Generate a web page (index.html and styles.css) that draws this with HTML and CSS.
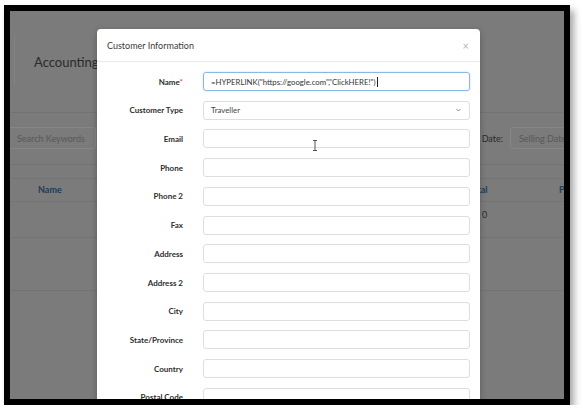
FILE: index.html
```html
<!DOCTYPE html>
<html lang="en">
<head>
<meta charset="utf-8">
<title>Customer Information</title>
<link rel="stylesheet" href="styles.css">
</head>
<body>
<div class="frame">
  <div class="screen">
    <!-- page behind the dialog (dimmed by the backdrop) -->
    <div class="page">
      <div class="title-card"><h1 class="page-title">Accounting</h1></div>
      <div class="rule rule-a"></div>
      <div class="toolbar">
        <div class="fake-input search">Search Keywords</div>
        <div class="date-filter">
          <span class="date-label">Date:</span>
          <div class="fake-input date">Selling Date</div>
        </div>
      </div>
      <div class="rule rule-b"></div>
      <div class="table-head">
        <span class="th th-name">Name</span>
        <span class="th th-total">Total</span>
        <span class="th th-profit">Profit</span>
      </div>
      <div class="table-row">
        <span class="td td-total">0</span>
      </div>
      <div class="card-foot"></div>
    </div>

    <!-- dialog -->
    <div class="modal">
      <div class="modal-header">
        <span class="modal-title">Customer Information</span>
        <span class="modal-close">×</span>
      </div>
      <form class="modal-body">
        <label class="field-label">Name<span class="req">*</span></label>
        <div class="field focus">=HYPERLINK("https://google.com","ClickHERE!")<span class="caret"></span></div>

        <label class="field-label">Customer Type</label>
        <div class="field select">Traveller
          <svg class="chev" viewBox="0 0 6 4" width="5" height="4"><path d="M0.5 0.7l2.5 2.5 2.5-2.5" fill="none" stroke="#666" stroke-width="0.9"/></svg>
        </div>

        <label class="field-label">Email</label>
        <div class="field"></div>

        <label class="field-label">Phone</label>
        <div class="field"></div>

        <label class="field-label">Phone 2</label>
        <div class="field"></div>

        <label class="field-label">Fax</label>
        <div class="field"></div>

        <label class="field-label">Address</label>
        <div class="field"></div>

        <label class="field-label">Address 2</label>
        <div class="field"></div>

        <label class="field-label">City</label>
        <div class="field"></div>

        <label class="field-label">State/Province</label>
        <div class="field"></div>

        <label class="field-label">Country</label>
        <div class="field"></div>

        <label class="field-label">Postal Code</label>
        <div class="field"></div>
      </form>
      <!-- mouse pointer (text I-beam) hovering the Email field -->
      <svg class="ibeam" viewBox="0 0 6 11" width="6" height="11">
        <path d="M1 0.5h4M3 0.5v10M1 10.5h4" fill="none" stroke="#555" stroke-width="1"/>
      </svg>
    </div>
  </div>
</div>
</body>
</html>
```

FILE: styles.css
```css
html, body {
  margin: 0;
  background: #ffffff;
}

body {
  font-family: Lato, "Open Sans", sans-serif;
}

/* black window frame with a soft drop shadow */
.frame {
  margin: 5px 0 0 4px;
  width: 554px;
  height: 388px;
  border: 6px solid #000;
  box-shadow: 4px 5px 7px rgba(0, 0, 0, 0.35);
}

.screen {
  position: relative;
  width: 100%;
  height: 100%;
  overflow: hidden;
  background: #7a7b7a;
}

/* ---------- dimmed page ---------- */
.page {
  display: flex;
  flex-direction: column;
  color: #2d2d2d;
}

.title-card {
  margin: 27px 0 0 4px;
  height: 47px;
  border-left: 1px solid #828382;
  display: flex;
  align-items: center;
}

.page-title {
  margin: 0 0 0 19px;
  font-size: 13px;
  font-weight: 400;
  color: #2b2b2b;
}

.rule {
  height: 1px;
  background: #727372;
}

.rule-a {
  margin-top: 27px;
}

.toolbar {
  display: flex;
  justify-content: space-between;
  align-items: center;
  margin-top: 14px;
  height: 22px;
}

.fake-input {
  box-sizing: border-box;
  height: 22px;
  border: 1px solid #858685;
  border-radius: 3px;
  display: flex;
  align-items: center;
  font-size: 9px;
  color: #585958;
}

.search {
  width: 86px;
  padding-left: 7px;
  border-left: none;
  border-radius: 0 3px 3px 0;
}

.date-filter {
  display: flex;
  align-items: center;
  gap: 7px;
}

.date-label {
  font-size: 9px;
  color: #2a2a2a;
}

.date {
  width: 54px;
  padding-left: 8px;
  border-right: none;
  border-radius: 3px 0 0 3px;
  white-space: nowrap;
  overflow: hidden;
}

.rule-b {
  margin-top: 15px;
}

.table-head {
  position: relative;
  margin-top: 13px;
  height: 22px;
  border-top: 1px solid #737473;
  border-bottom: 1px solid #737473;
  font-size: 9px;
  font-weight: 700;
  color: #1d3b58;
}

.th {
  position: absolute;
  top: 5px;
}

.th-name { left: 28px; }
.th-total { left: 458px; }
.th-profit { left: 549px; }

.table-row {
  position: relative;
  height: 35px;
  border-bottom: 1px solid #737473;
  font-size: 9px;
  color: #2d2d2d;
}

.td-total {
  position: absolute;
  left: 472px;
  top: 7px;
}

.card-foot {
  height: 52px;
  border-bottom: 1px solid #727372;
}

/* ---------- dialog ---------- */
.modal {
  position: absolute;
  left: 87px;
  top: 18px;
  width: 383px;
  height: 420px;
  background: #fff;
  border-radius: 4px;
  box-shadow: 0 2px 6px rgba(0, 0, 0, 0.25);
}

.modal-header {
  box-sizing: border-box;
  height: 33px;
  padding: 0 11px 0 10px;
  border-bottom: 1px solid #e9e9e9;
  display: flex;
  align-items: center;
  justify-content: space-between;
}

.modal-title {
  font-size: 9px;
  color: #3a3a3a;
}

.modal-close {
  font-size: 11px;
  color: #b5b5b5;
}

.modal-body {
  margin: 0;
  display: grid;
  grid-template-columns: 76px 1fr;
  column-gap: 20px;
  row-gap: 9.73px;
  padding: 10px 10px 0 10px;
}

.field-label {
  align-self: center;
  text-align: right;
  font-size: 8px;
  font-weight: 700;
  color: #2e2e2e;
  white-space: nowrap;
}

.req {
  color: #d9534f;
}

.field {
  box-sizing: border-box;
  height: 19px;
  border: 1px solid #dedede;
  border-radius: 3px;
  padding: 0 7px;
  display: flex;
  align-items: center;
  font-size: 7.8px;
  color: #444;
  white-space: nowrap;
}

.field.focus {
  border-color: #8db7e3;
  box-shadow: 0 0 2px rgba(102, 160, 220, 0.45);
  color: #333;
}

.caret {
  display: inline-block;
  width: 1px;
  height: 10px;
  margin-left: 1px;
  background: #222;
}

.select {
  justify-content: space-between;
  color: #444;
}

.chev {
  display: block;
  margin-right: 1px;
}

.ibeam {
  position: absolute;
  left: 215px;
  top: 111px;
}
```
